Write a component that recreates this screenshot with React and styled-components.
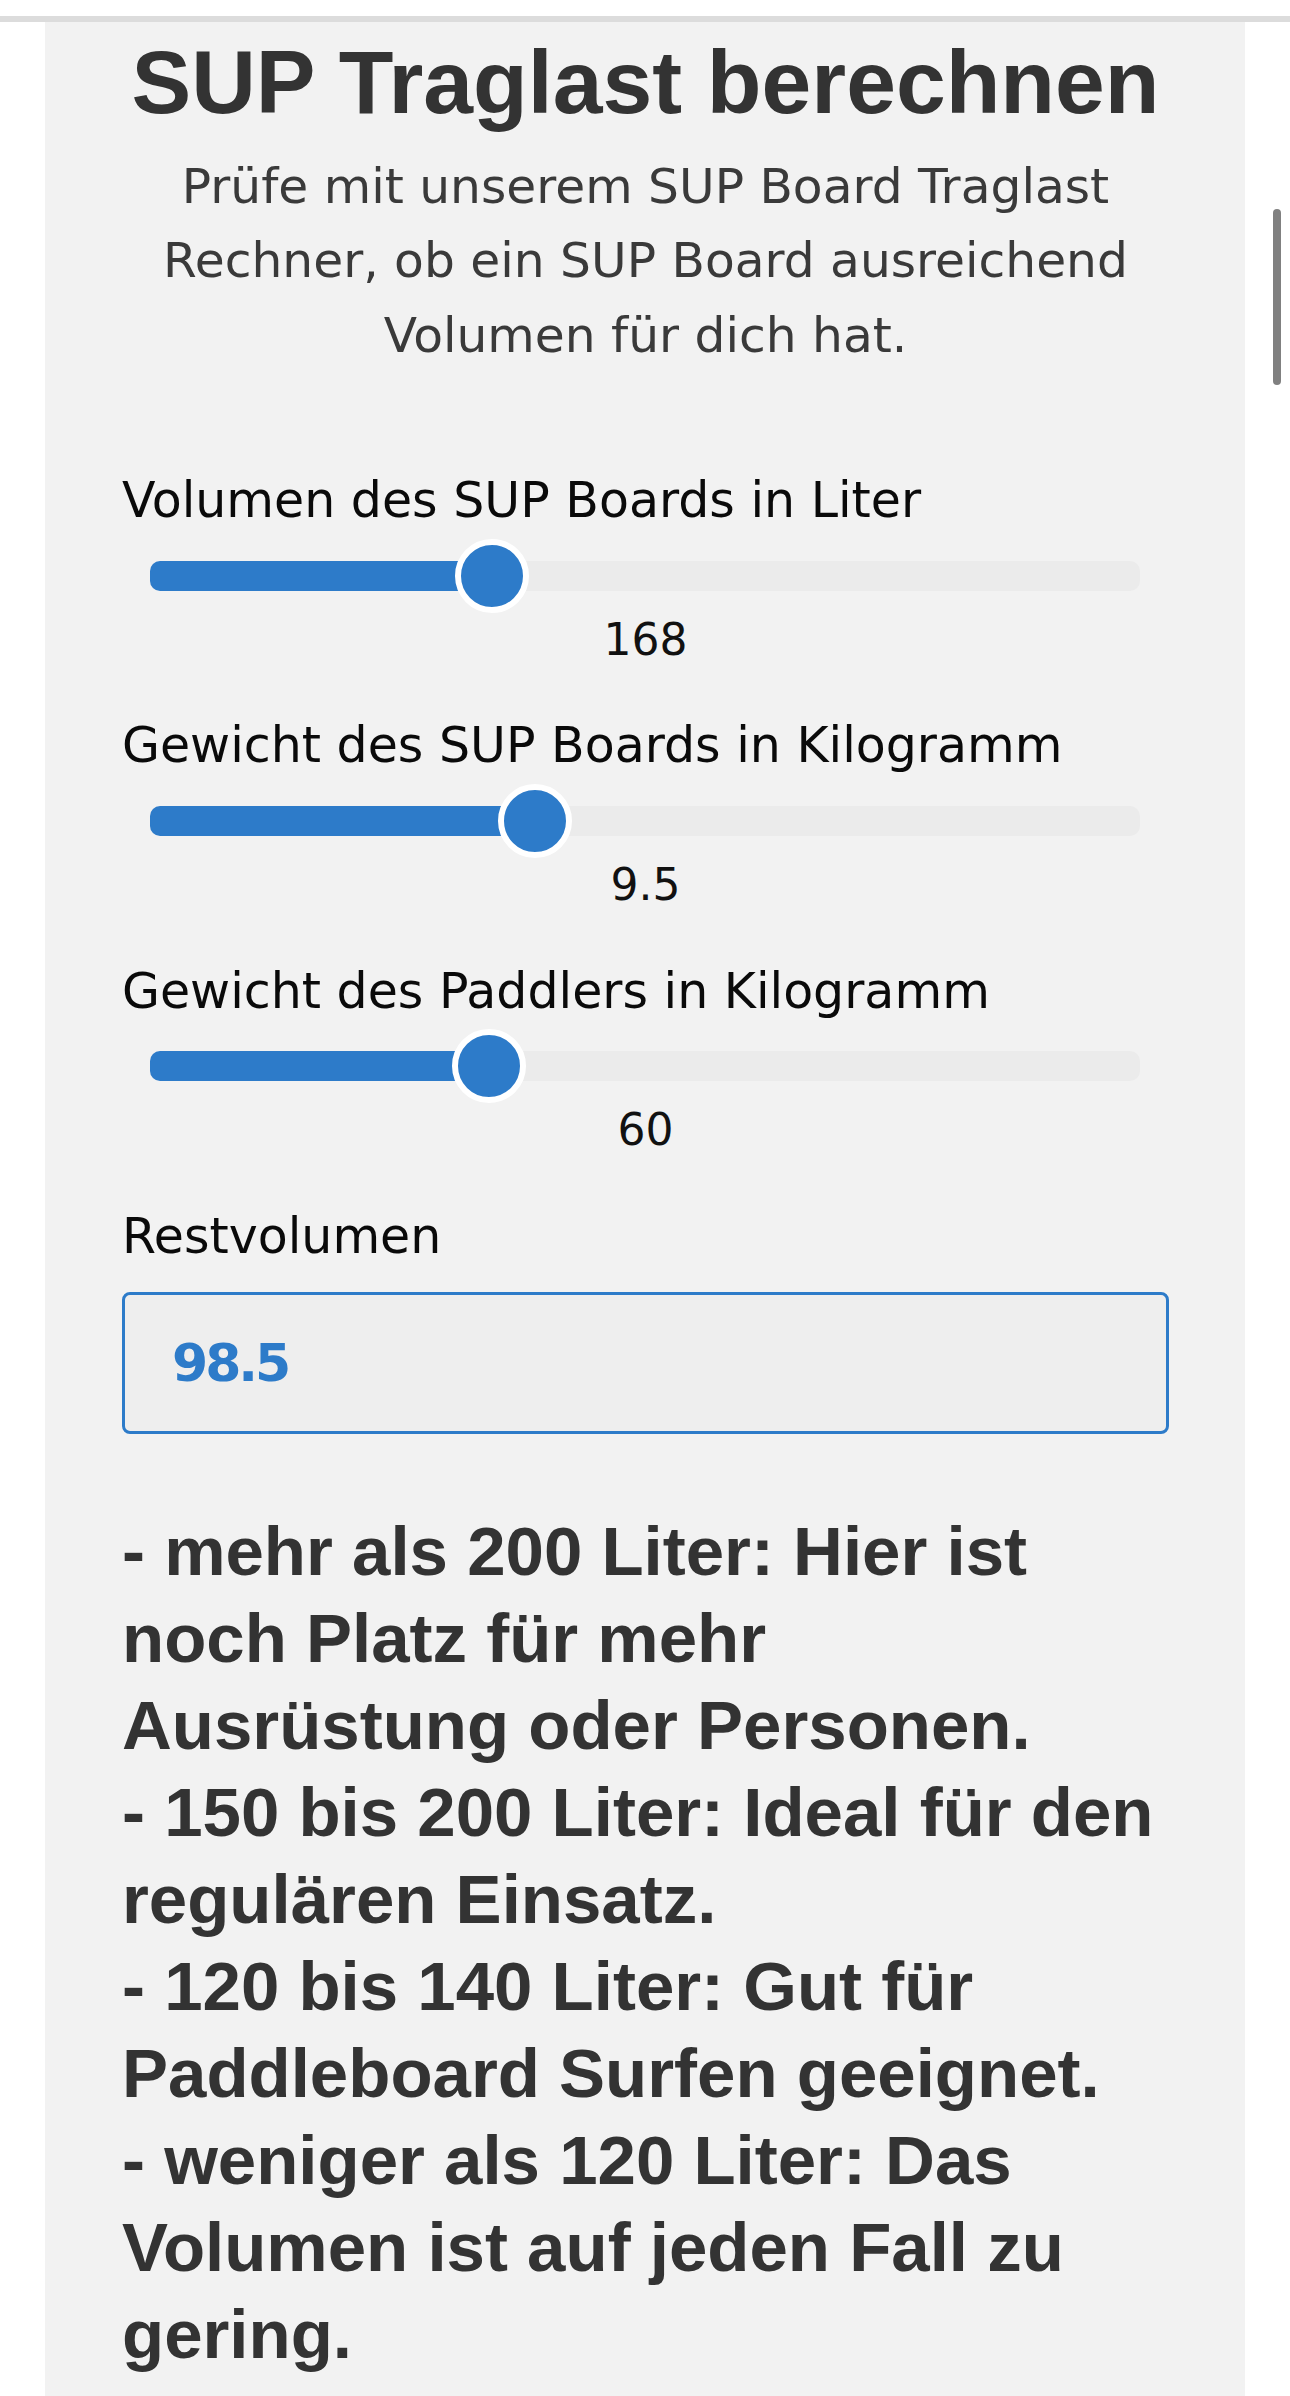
import React, { useState } from 'react';
import styled, { createGlobalStyle } from 'styled-components';

const GlobalStyle = createGlobalStyle`
  html, body {
    margin: 0;
    padding: 0;
    background: #ffffff;
    overflow: hidden;
  }
  * {
    box-sizing: border-box;
  }
`;

const Page = styled.div`
  min-height: 100vh;
  display: flex;
  flex-direction: column;
`;

const TopBar = styled.div`
  height: 22px;
  background: #ffffff;
  border-bottom: 6px solid #dcdcdc;
`;

const Panel = styled.main`
  flex: 1;
  margin: 0 45px;
  background: #f2f2f2;
  padding: 7px 76px 0 77px;
`;

const Title = styled.h1`
  margin: 0;
  font-family: "Liberation Sans", Arial, sans-serif;
  font-weight: 700;
  font-size: 89.5px;
  line-height: 106.8px;
  color: #333333;
  text-align: center;
`;

const Intro = styled.p`
  margin: 13px 0 0;
  font-family: "DejaVu Sans", sans-serif;
  font-weight: 400;
  font-size: 48.7px;
  line-height: 74.4px;
  color: #3a3a3a;
  text-align: center;
`;

const Form = styled.section`
  margin-top: 100px;
  display: flex;
  flex-direction: column;
  gap: 51px;
`;

const Field = styled.div`
  display: flex;
  flex-direction: column;
`;

const Label = styled.label`
  font-family: "DejaVu Sans", sans-serif;
  font-size: 49px;
  line-height: 57.6px;
  color: #0a0a0a;
`;

const Range = styled.input.attrs({ type: 'range' })`
  -webkit-appearance: none;
  appearance: none;
  display: block;
  width: calc(100% - 57px);
  height: 74px;
  margin: 9px 29px 0 28px;
  padding: 0;
  background: transparent;
  cursor: pointer;

  &:focus {
    outline: none;
  }

  &::-webkit-slider-runnable-track {
    height: 30px;
    border-radius: 10px;
    background: linear-gradient(
      to right,
      #2d7bc9 0,
      #2d7bc9 var(--fill),
      #ebebeb var(--fill),
      #ebebeb 100%
    );
  }

  &::-webkit-slider-thumb {
    -webkit-appearance: none;
    appearance: none;
    width: 74px;
    height: 74px;
    margin-top: -22px;
    border-radius: 50%;
    border: 6px solid #ffffff;
    background: #2d7bc9;
  }
`;

const Value = styled.div`
  margin-top: 1px;
  font-family: "DejaVu Sans", sans-serif;
  font-size: 44px;
  line-height: 52.8px;
  color: #111111;
  text-align: center;
`;

const ResultLabel = styled(Label)`
  margin-bottom: 26px;
`;

const ResultBox = styled.output`
  display: flex;
  align-items: center;
  height: 142px;
  padding-left: 47px;
  border: 3px solid #2d7bc9;
  border-radius: 8px;
  background: #eeeeee;
  font-family: "DejaVu Sans", sans-serif;
  font-weight: 700;
  font-size: 52px;
  letter-spacing: -3px;
  color: #2d7bc9;
`;

const Guide = styled.p`
  max-width: 1040px;
  margin: 74px 0 0;
  font-family: "Liberation Sans", Arial, sans-serif;
  font-weight: 700;
  font-size: 69px;
  line-height: 87px;
  color: #333333;
`;

const ScrollThumb = styled.div`
  position: fixed;
  top: 209px;
  right: 9px;
  width: 8px;
  height: 176px;
  border-radius: 4px;
  background: #808080;
`;

const Slider = ({ label, value, min, max, step, onChange }) => {
  const frac = (value - min) / (max - min);
  return (
    <Field>
      <Label>{label}</Label>
      <Range
        min={min}
        max={max}
        step={step}
        value={value}
        onChange={(e) => onChange(parseFloat(e.target.value))}
        style={{ '--fill': `calc(37px + ${frac} * (100% - 74px))` }}
      />
      <Value>{value}</Value>
    </Field>
  );
};

const App = () => {
  const [volume, setVolume] = useState(168);
  const [boardWeight, setBoardWeight] = useState(9.5);
  const [paddler, setPaddler] = useState(60);

  const rest = Math.round((volume - boardWeight - paddler) * 10) / 10;

  return (
    <Page>
      <GlobalStyle />
      <TopBar />
      <Panel>
        <Title>SUP Traglast berechnen</Title>
        <Intro>
          Prüfe mit unserem SUP Board Traglast Rechner, ob ein SUP Board ausreichend Volumen für dich hat.
        </Intro>

        <Form>
          <Slider
            label="Volumen des SUP Boards in Liter"
            value={volume}
            min={0}
            max={505}
            step={1}
            onChange={setVolume}
          />
          <Slider
            label="Gewicht des SUP Boards in Kilogramm"
            value={boardWeight}
            min={0}
            max={25}
            step={0.5}
            onChange={setBoardWeight}
          />
          <Slider
            label="Gewicht des Paddlers in Kilogramm"
            value={paddler}
            min={0}
            max={182}
            step={1}
            onChange={setPaddler}
          />
          <Field>
            <ResultLabel>Restvolumen</ResultLabel>
            <ResultBox>{rest}</ResultBox>
          </Field>
        </Form>

        <Guide>
          - mehr als 200 Liter: Hier ist noch Platz für mehr Ausrüstung oder Personen.
          <br />
          - 150 bis 200 Liter: Ideal für den regulären Einsatz.
          <br />
          - 120 bis 140 Liter: Gut für Paddleboard Surfen geeignet.
          <br />
          - weniger als 120 Liter: Das Volumen ist auf jeden Fall zu gering.
        </Guide>
      </Panel>
      <ScrollThumb />
    </Page>
  );
};

export default App;
